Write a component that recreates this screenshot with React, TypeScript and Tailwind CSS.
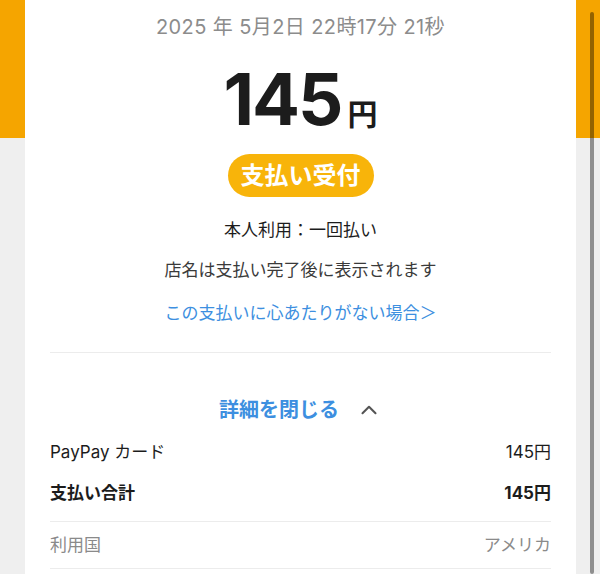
import { ChevronUp } from 'lucide-react';

// 明細の1行
function Row({ label, value, bold, muted }: { label: string; value: string; bold?: boolean; muted?: boolean }) {
  const color = muted ? 'text-[#8a8a8a]' : 'text-[#1c1c1c]';
  return (
    <div className={`flex items-center justify-between h-[41px] text-[17px] ${color} ${bold ? 'font-bold' : ''}`}>
      <span>{label}</span>
      <span>{value}</span>
    </div>
  );
}

export default function App() {
  return (
    <div
      className="relative h-[574px] overflow-hidden bg-[linear-gradient(to_bottom,#f5a500_138px,#efefef_138px)]"
      style={{ fontFamily: "Inter, 'Noto Sans CJK JP', sans-serif" }}
    >
      {/* 白いカード */}
      <div className="ml-[25px] w-[551px] h-full bg-white px-[25px] pt-[13px]">
        <p className="text-center text-[20px] leading-[28px] tracking-[0.4px] text-[#8c8c8c]">2025 年 5月2日 22時17分 21秒</p>

        <div className="mt-[18px] flex h-[80px] items-baseline justify-center leading-[80px] text-[#1c1c1c]">
          <span className="text-[71px] font-bold tracking-[-2px]">145</span>
          <span className="ml-[6px] text-[30px] font-semibold">円</span>
        </div>

        <div className="mt-[15px] flex justify-center">
          <span className="flex h-[43px] items-center rounded-full bg-[#f8b40a] px-[13px] text-[24px] font-bold leading-none text-white">
            支払い受付
          </span>
        </div>

        <div className="mt-[13px] text-[17px]">
          <p className="text-center leading-[40px] text-[#1c1c1c]">本人利用：一回払い</p>
          <p className="text-center leading-[40px] text-[#3a3a3a]">店名は支払い完了後に表示されます</p>
          <p className="mt-[3px] text-center leading-[40px] text-[#3d8fe0]">この支払いに心あたりがない場合＞</p>
        </div>

        <div className="mt-[19px] border-t border-[#ececec]" />

        <div className="mt-[37px] flex h-[40px] items-center justify-center gap-[17px]">
          <span className="text-[20px] font-bold text-[#3d8fe0]">詳細を閉じる</span>
          <ChevronUp className="h-[26px] w-[26px] text-[#555]" strokeWidth={1.9} />
        </div>

        <div className="mt-[2px]">
          <Row label="PayPay カード" value="145円" />
          <Row label="支払い合計" value="145円" bold />
        </div>
        <div className="mt-[7px] border-t border-[#ececec]" />
        <div className="mt-[4px] flex h-[40px] items-center justify-between text-[17px] text-[#8a8a8a]">
          <span>利用国</span>
          <span>アメリカ</span>
        </div>
        <div className="mt-[2px] border-t border-[#ececec]" />
      </div>

      {/* スクロールバー */}
      <div className="absolute right-[6px] top-[12px] bottom-0 w-[4px] rounded-full bg-black/40" />
    </div>
  );
}
